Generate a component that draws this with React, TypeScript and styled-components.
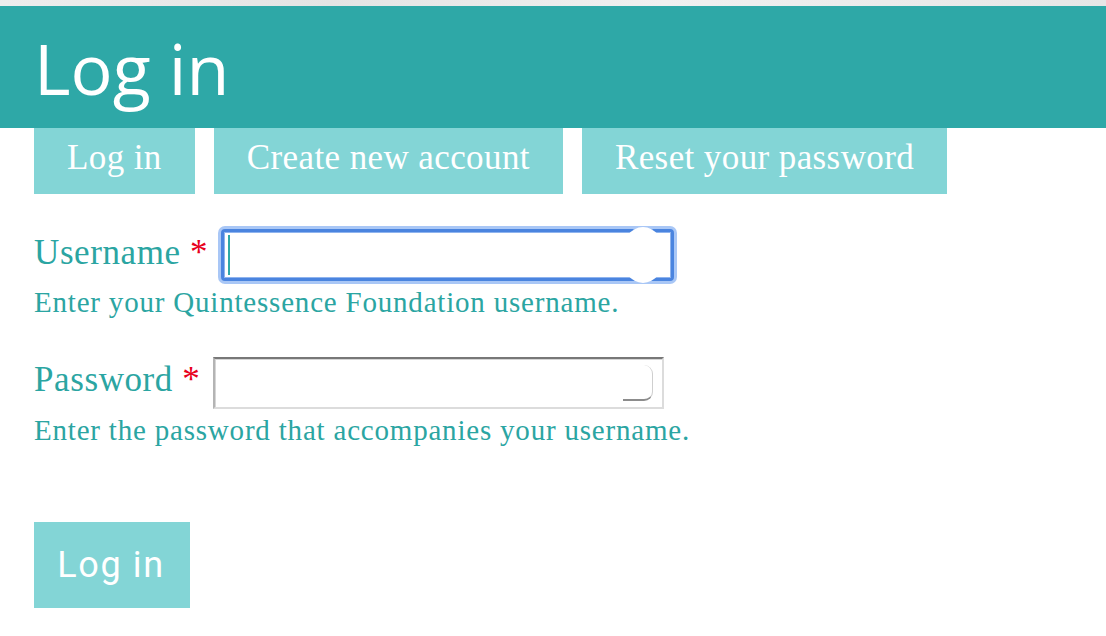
import styled, { createGlobalStyle } from 'styled-components';

const GlobalStyle = createGlobalStyle`
  html, body {
    margin: 0;
    padding: 0;
    background: #ffffff;
  }
  body {
    font-family: 'Liberation Serif', 'Times New Roman', serif;
  }
`;

const TEAL = '#2ea8a7';
const LIGHT_TEAL = '#83d5d6';
const TEXT_TEAL = '#2ba5a2';

const Page = styled.div`
  width: 1106px;
  min-height: 636px;
  overflow: hidden;
`;

const TopStrip = styled.div`
  height: 6px;
  background: linear-gradient(90deg, #ededed, #e4e4e4 30%, #f0f0f0 60%, #e6e6e6);
`;

const Header = styled.header`
  height: 122px;
  box-sizing: border-box;
  padding: 27px 0 0 34px;
  background: ${TEAL};
`;

const Title = styled.h1`
  margin: 0;
  font-family: 'Open Sans', 'Noto Sans', sans-serif;
  font-weight: 400;
  font-size: 70px;
  line-height: 70px;
  color: #ffffff;
`;

const Tabs = styled.ul`
  display: flex;
  gap: 19px;
  margin: 0;
  padding: 0 0 0 34px;
  list-style: none;
`;

const Tab = styled.li`
  height: 66px;
  box-sizing: border-box;
  padding: 0 33px 6px;
  background: ${LIGHT_TEAL};
  color: #ffffff;
  font-size: 35px;
  line-height: 60px;
  letter-spacing: 0.4px;
  white-space: nowrap;
`;

const Form = styled.form`
  padding: 35px 0 0 34px;
`;

const FormItem = styled.div<{ $gap?: number }>`
  margin-top: ${(p) => p.$gap ?? 0}px;
`;

const Row = styled.div`
  display: flex;
  align-items: flex-end;
`;

const Label = styled.label<{ $drop: number }>`
  padding-bottom: ${(p) => p.$drop}px;
  color: ${TEXT_TEAL};
  font-size: 35px;
  line-height: 42px;
  letter-spacing: 0.6px;
  white-space: nowrap;
`;

const Required = styled.span`
  color: #e8001c;
  letter-spacing: 0;
`;

const FieldWrap = styled.div`
  position: relative;
  margin-left: 13px;
`;

const TextInput = styled.input<{ $focused?: boolean }>`
  display: block;
  box-sizing: border-box;
  width: ${(p) => (p.$focused ? 453 : 451)}px;
  height: 52px;
  margin: 0;
  padding: 0 8px;
  background: #ffffff;
  font-size: 24px;
  outline: none;
  ${(p) =>
    p.$focused
      ? `
    border: 3px solid #4a84df;
    border-radius: 4px;
    box-shadow: 0 0 0 3px #a9c7f6, inset 0 0 0 1px #8fb4ee;
  `
      : `
    border-style: solid;
    border-width: 2px;
    border-color: #787878 #dcdcdc #dcdcdc #b4b4b4;
    border-radius: 0;
    box-shadow: inset 1px 1px 0 #d6d6d6;
  `}
`;

const Caret = styled.span`
  position: absolute;
  left: 7px;
  top: 6px;
  width: 2px;
  height: 40px;
  background: ${TEAL};
`;

const AutofillBubble = styled.span`
  position: absolute;
  right: 9px;
  top: -2px;
  width: 44px;
  height: 56px;
  border-radius: 50%;
  background: #ffffff;
`;

const RevealCorner = styled.span`
  position: absolute;
  right: 11px;
  top: 8px;
  width: 30px;
  height: 36px;
  box-sizing: border-box;
  border-right: 1px solid #cfcfcf;
  border-bottom: 2px solid #8c8c8c;
  border-radius: 0 9px 9px 0;
`;

const Description = styled.div`
  margin-top: 4px;
  color: ${TEXT_TEAL};
  font-size: 29px;
  line-height: 34.8px;
  letter-spacing: 0.8px;
`;

const Submit = styled.button`
  display: block;
  margin-top: 74px;
  width: 156px;
  height: 86px;
  padding: 0 2px 0 0;
  border: none;
  background: ${LIGHT_TEAL};
  color: #ffffff;
  font-family: Roboto, 'Liberation Sans', sans-serif;
  font-size: 36px;
  line-height: 86px;
  letter-spacing: 1.6px;
`;

const tabs = ['Log in', 'Create new account', 'Reset your password'];

export default function App(): JSX.Element {
  return (
    <Page>
      <GlobalStyle />
      <TopStrip />
      <Header>
        <Title>Log in</Title>
      </Header>
      <Tabs>
        {tabs.map((t) => (
          <Tab key={t}>{t}</Tab>
        ))}
      </Tabs>
      <Form onSubmit={(e) => e.preventDefault()}>
        <FormItem>
          <Row>
            <Label $drop={7} htmlFor="edit-name">
              Username <Required>*</Required>
            </Label>
            <FieldWrap>
              <TextInput id="edit-name" type="text" $focused readOnly />
              <Caret />
              <AutofillBubble />
            </FieldWrap>
          </Row>
          <Description>Enter your Quintessence Foundation username.</Description>
        </FormItem>
        <FormItem $gap={37}>
          <Row>
            <Label $drop={8} htmlFor="edit-pass">
              Password <Required>*</Required>
            </Label>
            <FieldWrap>
              <TextInput id="edit-pass" type="password" readOnly />
              <RevealCorner />
            </FieldWrap>
          </Row>
          <Description>Enter the password that accompanies your username.</Description>
        </FormItem>
        <Submit type="submit">Log in</Submit>
      </Form>
    </Page>
  );
}
